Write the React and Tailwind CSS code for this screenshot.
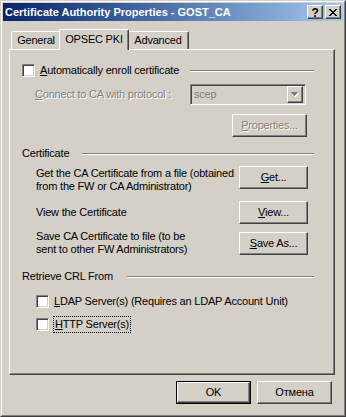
import React from 'react';

const FONT = "font-['Liberation_Sans',Arial,sans-serif] text-[11px] leading-[13px] tracking-[-0.2px] text-black";

function Raised({ className = '', children }) {
  return (
    <div
      className={`border border-t-white border-l-white border-r-[#404040] border-b-[#404040] shadow-[inset_-1px_-1px_#808080] bg-[#d4d0c8] ${className}`}
    >
      {children}
    </div>
  );
}

function Button({ className = '', children, isDefault, disabled }) {
  const label = (
    <span className={disabled ? 'text-[#808080] [text-shadow:1px_1px_0_#fff]' : ''}>{children}</span>
  );
  if (isDefault) {
    return (
      <div className={`border border-black ${className}`}>
        <Raised className="w-full h-full flex items-center justify-center">{label}</Raised>
      </div>
    );
  }
  return <Raised className={`flex items-center justify-center ${className}`}>{label}</Raised>;
}

function Check() {
  return (
    <div className="w-[13px] h-[13px] shrink-0 border border-t-[#808080] border-l-[#808080] border-r-white border-b-white bg-white shadow-[inset_1px_1px_#404040,inset_-1px_-1px_#d4d0c8]" />
  );
}

function Etch() {
  return <div className="flex-1 h-[2px] border-t border-b border-t-[#808080] border-b-white" />;
}

function Key({ children }) {
  return <span className="underline underline-offset-[1px]">{children}</span>;
}

function CloseGlyph() {
  const rows = [
    [0, 1, 6, 7],
    [1, 2, 5, 6],
    [2, 3, 4, 5],
    [3, 4],
    [2, 3, 4, 5],
    [1, 2, 5, 6],
    [0, 1, 6, 7],
  ];
  return (
    <svg width="8" height="7" viewBox="0 0 8 7" shapeRendering="crispEdges">
      {rows.map((cols, y) =>
        cols.map((x) => <rect key={`${x}-${y}`} x={x} y={y} width="1" height="1" fill="#000" />)
      )}
    </svg>
  );
}

function ArrowGlyph() {
  return (
    <svg width="8" height="5" viewBox="0 0 8 5" shapeRendering="crispEdges">
      <rect x="1" y="1" width="7" height="1" fill="#fff" />
      <rect x="2" y="2" width="5" height="1" fill="#fff" />
      <rect x="3" y="3" width="3" height="1" fill="#fff" />
      <rect x="4" y="4" width="1" height="1" fill="#fff" />
      <rect x="0" y="0" width="7" height="1" fill="#808080" />
      <rect x="1" y="1" width="5" height="1" fill="#808080" />
      <rect x="2" y="2" width="3" height="1" fill="#808080" />
      <rect x="3" y="3" width="1" height="1" fill="#808080" />
    </svg>
  );
}

function Tab({ children, className = '' }) {
  return (
    <div
      className={`mt-[2px] h-[18px] flex items-center justify-center rounded-t-[2px] border-l border-t border-r border-l-white border-t-white border-r-[#404040] shadow-[inset_-1px_0_#808080] bg-[#d4d0c8] ${className}`}
    >
      {children}
    </div>
  );
}

export default function App() {
  return (
    <div className={`${FONT} w-[346px] h-[417px] bg-[#d4d0c8] border border-t-[#d4d0c8] border-l-[#d4d0c8] border-r-[#404040] border-b-[#404040]`}>
      <div className="w-full h-full border border-t-white border-l-white border-r-[#808080] border-b-[#808080] p-[1px] flex flex-col">
        {/* title bar */}
        <div className="h-[18px] flex items-start bg-linear-to-r from-[#0a246a] to-[#a6caf0]">
          <div className="pl-[2px] h-[18px] flex items-center text-white font-bold text-[11px] tracking-normal">
            Certificate Authority Properties - GOST_CA
          </div>
          <div className="ml-auto mt-[2px] mr-[2px] flex gap-[2px]">
            <div className="w-[16px] h-[14px] border border-t-white border-l-white border-r-[#404040] border-b-[#404040] shadow-[inset_-1px_-1px_#808080] bg-[#d4d0c8] flex items-center justify-center font-bold text-[12px] leading-[12px] pt-[1px]">
              ?
            </div>
            <div className="w-[16px] h-[14px] border border-t-white border-l-white border-r-[#404040] border-b-[#404040] shadow-[inset_-1px_-1px_#808080] bg-[#d4d0c8] flex items-center justify-center">
              <CloseGlyph />
            </div>
          </div>
        </div>

        {/* tabs */}
        <div className="relative z-10 -mb-px mt-[8px] ml-[8px] flex items-start h-[21px]">
          <Tab className="w-[50px]">General</Tab>
          <div className="relative z-10 -mx-[2px] w-[70px] h-[21px] pb-[2px] flex items-center justify-center rounded-t-[2px] border-l border-t border-r border-l-white border-t-white border-r-[#404040] shadow-[inset_-1px_0_#808080] bg-[#d4d0c8]">
            OPSEC PKI
          </div>
          <Tab className="w-[62px]">Advanced</Tab>
        </div>

        {/* panel */}
        <div className="ml-[6px] w-[326px] h-[326px] border border-l-white border-t-white border-r-[#404040] border-b-[#404040] shadow-[inset_-1px_-1px_#808080] flex flex-col pl-[12px] pr-[20px]">
          <div className="mt-[14px] h-[13px] flex items-center">
            <div className="w-[168px] flex items-center">
              <Check />
              <span className="ml-[5px] whitespace-nowrap">
                <Key>A</Key>utomatically enroll certificate
              </span>
            </div>
            <Etch />
          </div>

          <div className="mt-[7px] flex items-center">
            <div className="pl-[13px] w-[168px] whitespace-nowrap text-[#808080] [text-shadow:1px_1px_0_#fff]">
              <Key>C</Key>onnect to CA with protocol :
            </div>
            <div className="w-[116px] h-[21px] border border-t-[#808080] border-l-[#808080] border-r-white border-b-white shadow-[inset_1px_1px_#404040,inset_-1px_-1px_#d4d0c8] p-[2px] flex items-center">
              <span className="flex-1 pl-[1px] text-[#808080]">scep</span>
              <Raised className="w-[16px] h-[17px] flex items-center justify-center">
                <ArrowGlyph />
              </Raised>
            </div>
          </div>

          <div className="mt-[9px] flex">
            <Button disabled className="ml-[210px] w-[75px] h-[23px]">
              <Key>P</Key>roperties...
            </Button>
          </div>

          <div className="mt-[10px] h-[13px] flex items-center">
            <div className="w-[60px]">Certificate</div>
            <Etch />
          </div>

          <div className="mt-[6px] flex items-start">
            <div className="ml-[14px] w-[203px] pt-[1px] whitespace-nowrap">
              Get the CA Certificate from a file (obtained
              <br />
              from the FW or CA Administrator)
            </div>
            <Button className="w-[69px] h-[23px]">
              <Key>G</Key>et...
            </Button>
          </div>

          <div className="mt-[8px] flex items-center">
            <div className="ml-[14px] w-[203px] whitespace-nowrap">View the Certificate</div>
            <Button className="w-[69px] h-[23px]">
              <Key>V</Key>iew...
            </Button>
          </div>

          <div className="mt-[6px] flex items-center">
            <div className="ml-[14px] w-[203px] whitespace-nowrap">
              Save CA Certificate to file (to be
              <br />
              sent to other FW Administrators)
            </div>
            <Button className="w-[69px] h-[23px]">
              <Key>S</Key>ave As...
            </Button>
          </div>

          <div className="mt-[14px] h-[13px] flex items-center">
            <div className="w-[105px] whitespace-nowrap">Retrieve CRL From</div>
            <Etch />
          </div>

          <div className="mt-[12px] ml-[14px] h-[13px] flex items-center">
            <Check />
            <span className="ml-[5px] whitespace-nowrap">
              <Key>L</Key>DAP Server(s) (Requires an LDAP Account Unit)
            </span>
          </div>

          <div className="mt-[10px] ml-[14px] h-[13px] flex items-center">
            <Check />
            <span className="ml-[4px] whitespace-nowrap border border-dotted border-black px-[1px] py-[1px]">
              <Key>H</Key>TTP Server(s)
            </span>
          </div>
        </div>

        {/* dialog buttons */}
        <div className="mt-[6px] pr-[11px] flex justify-end gap-[6px]">
          <Button isDefault className="w-[75px] h-[23px]">OK</Button>
          <Button className="w-[75px] h-[23px]">Отмена</Button>
        </div>
      </div>
    </div>
  );
}
